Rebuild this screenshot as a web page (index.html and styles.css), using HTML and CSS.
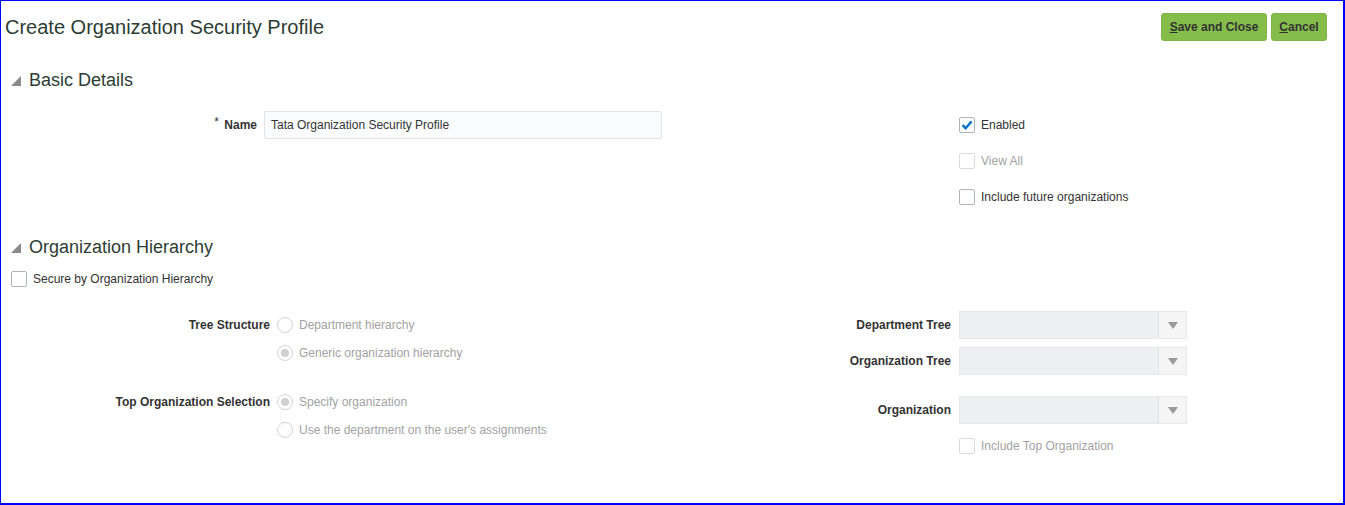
FILE: index.html
```html
<!DOCTYPE html>
<html>
<head>
<meta charset="utf-8">
<link rel="stylesheet" href="styles.css">
</head>
<body>
<div class="page">
  <div class="topbar">
    <h1 class="title">Create Organization Security Profile</h1>
    <div class="actions">
      <button class="btn btn-save"><u>S</u>ave and Close</button>
      <button class="btn btn-cancel"><u>C</u>ancel</button>
    </div>
  </div>

  <div class="sec-head sec-basic">
    <svg class="disclose" width="10" height="10" viewBox="0 0 10 10"><polygon points="0,10 10,10 10,0" fill="#8a8a8a"/></svg>
    <span>Basic Details</span>
  </div>
  <div class="cols basic-body">
    <div class="col-left basic-left">
      <div class="form-row name-row">
        <label class="flabel"><span class="req">*</span> Name</label>
        <div class="text-input">Tata Organization Security Profile</div>
      </div>
    </div>
    <div class="col-right">
      <div class="chk-row"><span class="chk checked"><svg width="14" height="14" viewBox="0 0 14 14"><path d="M2.5 7.2 L5.6 10.2 L11.6 3.4" fill="none" stroke="#0572ce" stroke-width="2.4"/></svg></span><span class="chk-text">Enabled</span></div>
      <div class="chk-row"><span class="chk disabled"></span><span class="chk-text dim">View All</span></div>
      <div class="chk-row"><span class="chk"></span><span class="chk-text">Include future organizations</span></div>
    </div>
  </div>

  <div class="sec-head sec-org">
    <svg class="disclose" width="10" height="10" viewBox="0 0 10 10"><polygon points="0,10 10,10 10,0" fill="#8a8a8a"/></svg>
    <span>Organization Hierarchy</span>
  </div>
  <div class="chk-row secure-row"><span class="chk"></span><span class="chk-text">Secure by Organization Hierarchy</span></div>

  <div class="cols hier-body">
    <div class="col-left hier-left">
      <div class="radio-group">
        <div class="flabel">Tree Structure</div>
        <div class="radios">
          <div class="radio-row"><span class="radio"></span><span class="dim">Department hierarchy</span></div>
          <div class="radio-row"><span class="radio on"></span><span class="dim">Generic organization hierarchy</span></div>
        </div>
      </div>
      <div class="radio-group group-gap">
        <div class="flabel">Top Organization Selection</div>
        <div class="radios">
          <div class="radio-row"><span class="radio on"></span><span class="dim">Specify organization</span></div>
          <div class="radio-row"><span class="radio"></span><span class="dim">Use the department on the user's assignments</span></div>
        </div>
      </div>
    </div>
    <div class="col-mid">
      <div class="sel-row">
        <div class="flabel">Department Tree</div>
        <div class="select"><span class="sel-btn"><svg width="10" height="7" viewBox="0 0 10 7"><polygon points="0,0 10,0 5,7" fill="#9a9a9a"/></svg></span></div>
      </div>
      <div class="sel-row row-gap">
        <div class="flabel">Organization Tree</div>
        <div class="select"><span class="sel-btn"><svg width="10" height="7" viewBox="0 0 10 7"><polygon points="0,0 10,0 5,7" fill="#9a9a9a"/></svg></span></div>
      </div>
      <div class="sel-row group-gap">
        <div class="flabel">Organization</div>
        <div class="select"><span class="sel-btn"><svg width="10" height="7" viewBox="0 0 10 7"><polygon points="0,0 10,0 5,7" fill="#9a9a9a"/></svg></span></div>
      </div>
      <div class="sel-row row-gap">
        <div></div>
        <div class="chk-row inline"><span class="chk disabled"></span><span class="chk-text dim">Include Top Organization</span></div>
      </div>
    </div>
  </div>
</div>
</body>
</html>
```

FILE: styles.css
```css
html, body {
  margin: 0;
  padding: 0;
  background: #ffffff;
}
body {
  font-family: "Liberation Sans", Arial, sans-serif;
  font-size: 12px;
  color: #333333;
}
.page {
  box-sizing: border-box;
  width: 1345px;
  height: 505px;
  border: 1px solid #0000ff;
  border-right-width: 2px;
  border-bottom-width: 2px;
  overflow: hidden;
}
.topbar {
  display: flex;
  justify-content: space-between;
  align-items: center;
  padding: 12px 16px 0 4px;
  height: 28px;
}
.title {
  margin: 0;
  font-size: 20px;
  font-weight: normal;
  color: #2c3d34;
  line-height: 28px;
}
.actions {
  display: flex;
  gap: 4px;
}
.btn {
  font-family: "Liberation Sans", Arial, sans-serif;
  font-size: 12px;
  font-weight: bold;
  color: #333333;
  background: #85bd4b;
  border: 1px solid #7db443;
  border-radius: 3px;
  height: 28px;
  padding: 0;
}
.btn-save { width: 106px; }
.btn-cancel { width: 56px; }
.btn u { text-decoration: underline; }

.sec-head {
  display: flex;
  align-items: center;
  height: 24px;
  padding-left: 10px;
  font-size: 18px;
  color: #2c3d34;
}
.sec-head .disclose {
  margin-right: 8px;
  margin-top: 1px;
}
.sec-basic { margin-top: 27px; }
.sec-org { margin-top: 20px; }

.cols {
  display: flex;
}
.basic-body { margin-top: 15px; }
.basic-left { width: 958px; }
.col-right { display: flex; flex-direction: column; }

.form-row {
  display: grid;
  grid-template-columns: 256px 398px;
  column-gap: 7px;
  align-items: center;
  height: 36px;
}
.flabel {
  text-align: right;
  font-weight: bold;
  color: #333333;
  white-space: nowrap;
}
.req {
  font-weight: normal;
  color: #333;
  position: relative;
  top: -3px;
  margin-right: 2px;
}
.text-input {
  box-sizing: border-box;
  height: 28px;
  line-height: 26px;
  border: 1px solid #dfe4e7;
  border-radius: 2px;
  background: #fbfcfd;
  padding-left: 6px;
  color: #333333;
}

.chk-row {
  display: flex;
  align-items: center;
  height: 36px;
}
.chk {
  box-sizing: border-box;
  width: 16px;
  height: 16px;
  border: 1px solid #aab4ba;
  border-radius: 2px;
  background: #ffffff;
  display: flex;
  align-items: center;
  justify-content: center;
  flex: none;
}
.chk.disabled { border-color: #dadada; }
.chk-text { margin-left: 6px; }
.dim { color: #a2a2a2; }

.secure-row {
  height: 24px;
  margin-top: 8px;
  padding-left: 10px;
}

.hier-body { margin-top: 20px; }
.hier-left { width: 799px; }
.radio-group {
  display: grid;
  grid-template-columns: 269px auto;
  column-gap: 7px;
}
.radio-group .flabel { line-height: 28px; }
.group-gap { margin-top: 21px; }
.radios { display: flex; flex-direction: column; }
.radio-row {
  display: flex;
  align-items: center;
  height: 28px;
}
.radio {
  box-sizing: border-box;
  width: 16px;
  height: 16px;
  border-radius: 50%;
  border: 1px solid #d4d4d4;
  background: #fff;
  margin-right: 6px;
  display: flex;
  align-items: center;
  justify-content: center;
}
.radio.on::after {
  content: "";
  width: 8px;
  height: 8px;
  border-radius: 50%;
  background: #d0d0d0;
}

.col-mid { display: flex; flex-direction: column; }
.sel-row {
  display: grid;
  grid-template-columns: 151px 228px;
  column-gap: 8px;
  align-items: center;
  height: 28px;
}
.row-gap { margin-top: 8px; }
.select {
  box-sizing: border-box;
  height: 28px;
  background: #eeeff0;
  border: 1px solid #e8e8e8;
  display: flex;
  justify-content: flex-end;
}
.sel-btn {
  box-sizing: border-box;
  width: 28px;
  height: 26px;
  border-left: 1px solid #e2e2e2;
  background: #f5f5f5;
  display: flex;
  align-items: center;
  justify-content: center;
}
.chk-row.inline { height: 28px; }
```
